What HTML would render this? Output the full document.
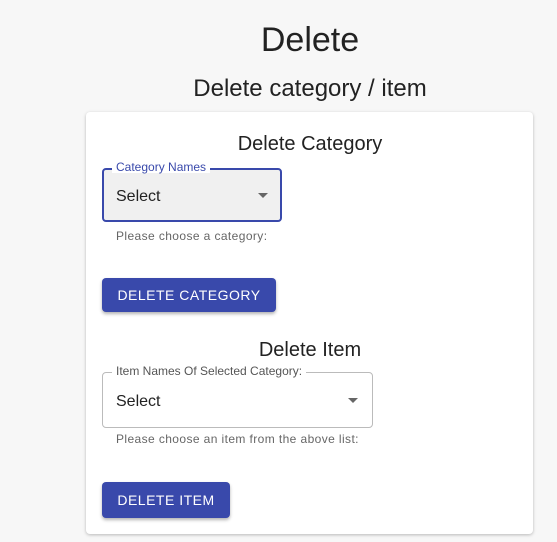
<!DOCTYPE html>
<html><head><style>
html,body{margin:0;padding:0}
body{width:557px;height:542px;overflow:hidden;background:#f7f7f7;font-family:"Liberation Sans",Arial,sans-serif;position:relative;color:#222}
.a{position:absolute;white-space:nowrap;z-index:2}
.sel{position:absolute;box-sizing:border-box;border-radius:4px;z-index:2}
.lbl{position:absolute;background:#ffffff;padding:0 4px;font-size:12px;line-height:12px;z-index:3}
.arrow{position:absolute;width:0;height:0;border-left:5px solid transparent;border-right:5px solid transparent;border-top:5px solid #666;z-index:3}
.btn{position:absolute;background:#3949ab;color:#fff;font-size:14px;letter-spacing:.5px;border-radius:4px;text-align:center;box-shadow:0 2px 3px rgba(0,0,0,.3);z-index:2}
.help{font-size:12px;color:#666;letter-spacing:.4px}
</style></head><body>
<div style="position:absolute;left:86px;top:112px;width:447px;height:422px;background-color:#ffffff;border-radius:4px;box-shadow:0 1px 3px rgba(0,0,0,.25);z-index:1"></div>
<div class="a" style="left:0;width:620px;text-align:center;top:21px;font-size:34px">Delete</div>
<div class="a" style="left:0;width:620px;text-align:center;top:75px;font-size:24px">Delete category / item</div>
<div class="a" style="left:0;width:620px;text-align:center;top:133px;font-size:20px">Delete Category</div>
<div class="sel" style="left:102px;top:168px;width:180px;height:54px;background:#f0f0f0;border:2px solid #3949ab"></div>
<div class="lbl" style="left:112px;top:161px;color:#3949ab">Category Names</div>
<div class="a" style="left:116px;top:188px;font-size:16px">Select</div>
<div class="arrow" style="left:258px;top:193px"></div>
<div class="a help" style="left:116px;top:229px">Please choose a category:</div>
<div class="btn" style="left:102px;top:278px;width:174px;height:34px;line-height:34px">DELETE CATEGORY</div>
<div class="a" style="left:0;width:620px;text-align:center;top:339px;font-size:20px">Delete Item</div>
<div class="sel" style="left:102px;top:372px;width:271px;height:56px;border:1px solid #bbb"></div>
<div class="lbl" style="left:112px;top:365px;color:#555">Item Names Of Selected Category:</div>
<div class="a" style="left:116px;top:393px;font-size:16px">Select</div>
<div class="arrow" style="left:348px;top:398px"></div>
<div class="a help" style="left:116px;top:432px">Please choose an item from the above list:</div>
<div class="btn" style="left:102px;top:482px;width:128px;height:36px;line-height:36px">DELETE ITEM</div>
</body></html>
